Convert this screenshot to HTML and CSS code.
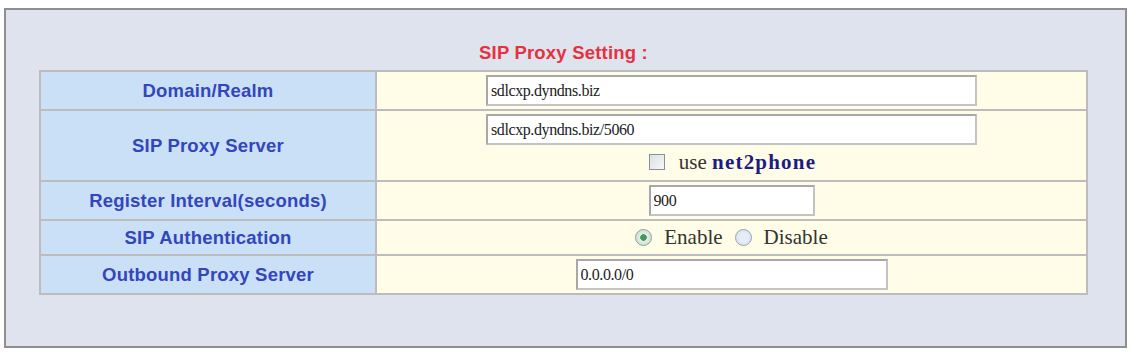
FILE: index.html
```html
<!DOCTYPE html>
<html lang="en">
<head>
    <meta charset="UTF-8">
    <title>SIP Proxy Setting</title>
    <link rel="stylesheet" href="styles.css">
</head>
<body>
    <div class="panel">
        <div class="title">SIP Proxy Setting :</div>
        <table class="setting">
            <tr class="row-a">
                <td class="label">Domain/Realm</td>
                <td class="value"><input class="field wide" type="text" value="sdlcxp.dyndns.biz"></td>
            </tr>
            <tr class="row-b">
                <td class="label">SIP Proxy Server</td>
                <td class="value">
                    <input class="field wide" type="text" value="sdlcxp.dyndns.biz/5060">
                    <div class="check-line">
                        <span class="checkbox"></span>
                        <span class="serif">use <b class="brand">net2phone</b></span>
                    </div>
                </td>
            </tr>
            <tr class="row-a">
                <td class="label">Register Interval(seconds)</td>
                <td class="value"><input class="field short" type="text" value="900"></td>
            </tr>
            <tr class="row-c">
                <td class="label">SIP Authentication</td>
                <td class="value">
                    <div class="radio-line">
                        <span class="radio on"></span>
                        <span class="serif">Enable</span>
                        <span class="radio"></span>
                        <span class="serif">Disable</span>
                    </div>
                </td>
            </tr>
            <tr class="row-a">
                <td class="label">Outbound Proxy Server</td>
                <td class="value"><input class="field mid" type="text" value="0.0.0.0/0"></td>
            </tr>
        </table>
    </div>
</body>
</html>
```

FILE: styles.css
```css
body {
    margin: 0;
    background-color: #ffffff;
    font-family: "Liberation Sans", Arial, sans-serif;
}
.panel {
    box-sizing: border-box;
    width: 1123px;
    height: 340px;
    margin: 8px 0 0 4px;
    padding: 32px 0 0 33px;
    border: 2px solid #8e8e8e;
    background-color: #dfe3ee;
}
.title {
    width: 1049px;
    height: 22px;
    line-height: 22px;
    margin-bottom: 6px;
    text-align: center;
    font-size: 18.5px;
    font-weight: bold;
    letter-spacing: 0.2px;
    color: #e5323e;
}
.setting {
    width: 1049px;
    border-collapse: collapse;
    border: 2px solid #c6c6c6;
}
.setting td {
    border: 2px solid #bcbcbc;
    padding: 0;
}
.row-a td {
    height: 37px;
}
.row-b td {
    height: 69px;
}
.row-c td {
    height: 33px;
}
.label {
    width: 334px;
    background-color: #cae0f6;
    color: #3346bd;
    font-size: 18.5px;
    font-weight: bold;
    text-align: center;
    letter-spacing: 0.2px;
}
.value {
    background-color: #fffde7;
    text-align: center;
}
.field {
    display: block;
    box-sizing: border-box;
    height: 31px;
    margin: 0 auto;
    padding: 0 3px;
    border: 2px solid #c3c3c3;
    border-top-color: #a8a8a8;
    border-left-color: #a8a8a8;
    background-color: #ffffff;
    font-family: "Liberation Serif", "Times New Roman", serif;
    font-size: 16px;
    letter-spacing: -0.4px;
    color: #222222;
}
.wide {
    width: 491px;
}
.short {
    width: 166px;
}
.mid {
    width: 312px;
}
.row-b .field {
    margin-top: 2px;
}
.check-line,
.radio-line {
    display: flex;
    justify-content: center;
    align-items: center;
}
.check-line {
    height: 34px;
    gap: 14px;
    margin-left: 2px;
}
.radio-line {
    gap: 12px;
}
.serif {
    font-family: "Liberation Serif", "Times New Roman", serif;
    font-size: 21px;
    color: #333333;
}
.brand {
    color: #1c1c82;
    letter-spacing: 1.2px;
}
.checkbox {
    width: 14px;
    height: 14px;
    border: 1px solid #8a8f99;
    background: linear-gradient(135deg, #dcdfe4, #f8f8f8);
}
.radio {
    box-sizing: border-box;
    width: 17px;
    height: 17px;
    border: 1.5px solid #9aa6b4;
    border-radius: 50%;
    background: radial-gradient(circle, #e6eef5 40%, #c9d8e6);
}
.radio.on {
    background: radial-gradient(circle, #3f9a5c 0 28%, #e4ece6 34%, #c7d5cb);
    border-color: #8aa896;
}
```
